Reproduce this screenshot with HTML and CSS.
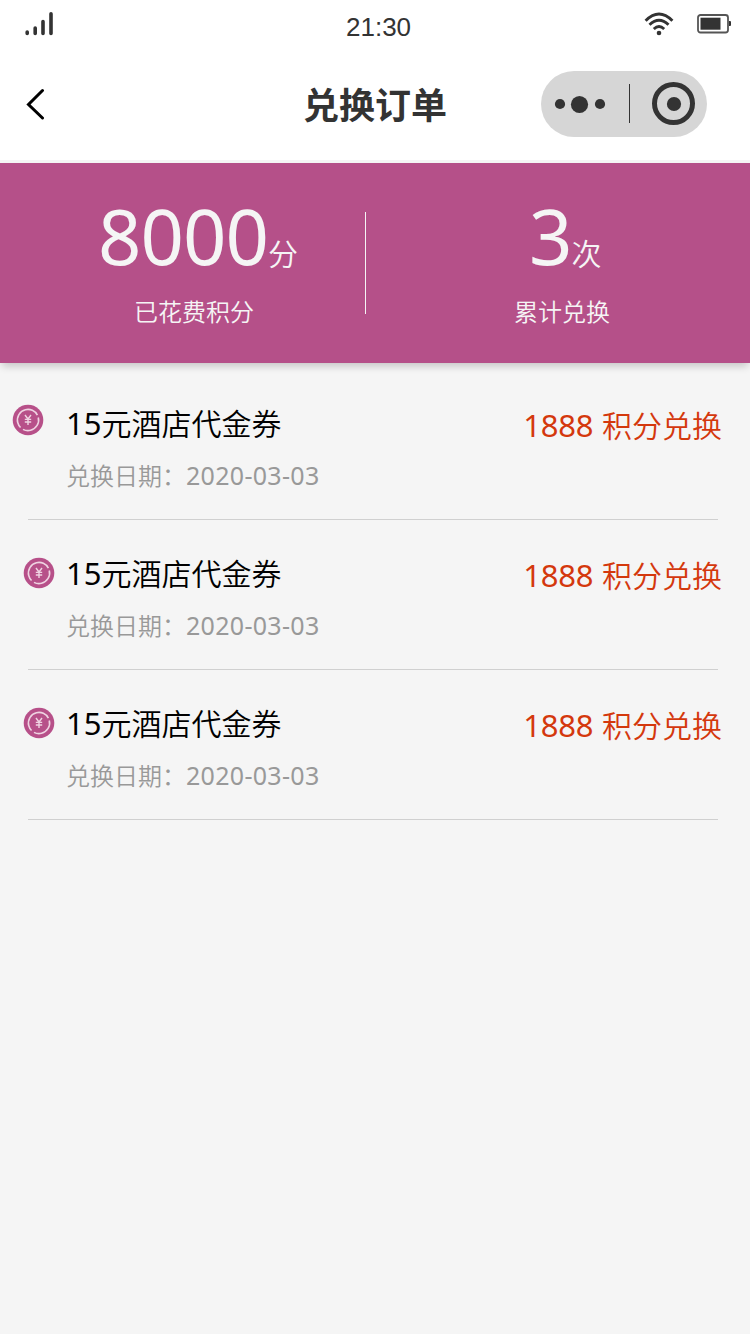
FILE: index.html
```html
<!DOCTYPE html>
<html lang="zh-CN">
<head>
    <meta charset="UTF-8">
    <meta name="viewport" content="width=device-width, initial-scale=1.0">
    <title>兑换订单</title>
    <link rel="stylesheet" href="styles.css">
</head>
<body>
    <svg class="symbols" width="0" height="0">
        <symbol id="coin" viewBox="0 0 32 32">
            <circle cx="16" cy="16" r="15.3" fill="#b75089"/>
            <circle cx="16" cy="16" r="10.6" fill="none" stroke="#efd3e2" stroke-width="1.6" stroke-dasharray="24.300 3 36.300 3" transform="rotate(-14 16 16)"/>
            <path d="M13 11l3 4 3-4M12.8 15.4h6.4M12.8 18h6.4M16 15v6" fill="none" stroke="#efd3e2" stroke-width="1.4"/>
        </symbol>
    </svg>

    <div class="header">
        <div class="status-bar">
            <svg class="signal" width="30" height="26" viewBox="0 0 30 26" stroke="#333" stroke-width="3.6" stroke-linecap="round">
                <path d="M3.2 21v1.5M11.2 17v5.5M19 10.5v12M27 2.8v19.7"/>
            </svg>
            <span class="time">21:30</span>
            <svg class="wifi" width="30" height="24" viewBox="0 0 30 24" fill="none" stroke="#333" stroke-width="2.9">
                <path d="M1.6 8.7Q15-4.7 28.4 8.7M5.5 12.8Q15 3.8 24.5 12.8M9.8 17Q15 12.2 20.2 17"/>
                <circle cx="15" cy="21" r="2.3" fill="#333" stroke="none"/>
            </svg>
            <svg class="battery" width="34" height="20" viewBox="0 0 34 20">
                <rect x="1" y="1" width="30" height="17.5" rx="2.5" fill="none" stroke="#555" stroke-width="1.8"/>
                <rect x="3.5" y="3.7" width="20" height="12" fill="#333"/>
                <path d="M32 7h1q1 0 1 1v3q0 1-1 1h-1z" fill="#333"/>
            </svg>
        </div>
        <div class="nav-bar">
            <svg class="back" width="20" height="32" viewBox="0 0 20 32" fill="none" stroke="#000" stroke-width="3" stroke-linecap="round">
                <path d="M16.5 2.5L2.5 16.5l14 13.5"/>
            </svg>
            <h1>兑换订单</h1>
            <div class="capsule">
                <svg width="166" height="66" viewBox="0 0 166 66" fill="#333">
                    <circle cx="19" cy="33" r="5.1"/>
                    <circle cx="38.5" cy="33.5" r="8.6"/>
                    <circle cx="59" cy="33" r="5.1"/>
                    <rect x="88" y="13" width="1" height="39"/>
                    <circle cx="132.5" cy="32.5" r="19" fill="none" stroke="#333" stroke-width="5"/>
                    <circle cx="133" cy="33" r="7.1"/>
                </svg>
            </div>
        </div>
    </div>

    <div class="summary">
        <div class="summary-item spent">
            <p class="total"><span class="num">8000</span>分</p>
            <p class="label">已花费积分</p>
        </div>
        <div class="summary-item times">
            <p class="total"><span class="num">3</span>次</p>
            <p class="label">累计兑换</p>
        </div>
    </div>

    <div class="orders">
        <div class="order first">
            <svg class="coin"><use href="#coin"/></svg>
            <div class="info">
                <h2><span class="num">15</span>元酒店代金券</h2>
                <p class="date">兑换日期：<span class="num">2020-03-03</span></p>
            </div>
            <p class="points"><span class="num">1888</span> 积分兑换</p>
        </div>
        <div class="order">
            <svg class="coin"><use href="#coin"/></svg>
            <div class="info">
                <h2><span class="num">15</span>元酒店代金券</h2>
                <p class="date">兑换日期：<span class="num">2020-03-03</span></p>
            </div>
            <p class="points"><span class="num">1888</span> 积分兑换</p>
        </div>
        <div class="order">
            <svg class="coin"><use href="#coin"/></svg>
            <div class="info">
                <h2><span class="num">15</span>元酒店代金券</h2>
                <p class="date">兑换日期：<span class="num">2020-03-03</span></p>
            </div>
            <p class="points"><span class="num">1888</span> 积分兑换</p>
        </div>
    </div>
</body>
</html>
```
FILE: styles.css
```css
* {
    box-sizing: border-box;
    margin: 0;
    padding: 0;
}

body {
    font-family: "Noto Sans CJK SC", sans-serif;
    font-weight: 350;
    background: #f5f5f5;
    min-height: 1334px;
}

.symbols {
    display: block;
}

.num {
    font-family: "Noto Sans", "Noto Sans CJK SC", sans-serif;
    font-weight: 400;
}

.header {
    height: 160px;
    background: #fff;
}

.status-bar {
    display: flex;
    align-items: flex-start;
    height: 52px;
    padding: 0 19px 0 24px;
}

.signal {
    margin-top: 11px;
}

.time {
    margin: 11px 0 0 292px;
    width: 66px;
    font: 400 26px/32px "Liberation Sans", sans-serif;
    color: #333;
}

.wifi {
    margin: 12px 0 0 232px;
}

.battery {
    margin: 14px 0 0 23px;
}

.nav-bar {
    display: grid;
    grid-template-columns: 209px 1fr 209px;
    align-items: center;
    height: 104px;
}

.back {
    margin-left: 26px;
}

.nav-bar h1 {
    margin-top: -2px;
    font-size: 36px;
    line-height: 52px;
    font-weight: 700;
    color: #333;
    text-align: center;
}

.capsule {
    width: 166px;
    height: 66px;
    border-radius: 33px;
    background: #d6d6d6;
}

.summary {
    display: flex;
    height: 200px;
    margin-top: 3px;
    padding-top: 49px;
    background: #b55089;
    color: #f5f5f5;
    box-shadow: 0 5px 8px -2px rgba(0, 0, 0, 0.2);
}

.summary-item {
    height: 102px;
}

.spent {
    width: 366px;
    padding-left: 98px;
    border-right: 1px solid #f5f5f5;
}

.times {
    padding-left: 163px;
}

.total {
    height: 84px;
    margin-top: -18px;
    font-size: 30px;
    line-height: 84px;
    white-space: nowrap;
}

.total .num {
    font-size: 76px;
    letter-spacing: -1px;
}

.label {
    margin-top: 15px;
    font-size: 24px;
    line-height: 36px;
}

.spent .label {
    padding-left: 36px;
}

.times .label {
    margin-left: -15px;
}

.orders {
    padding: 7px 32px 0 28px;
}

.order {
    display: flex;
    align-items: flex-start;
    height: 150px;
    border-bottom: 1px solid #d0d0d0;
}

.coin {
    width: 32px;
    height: 32px;
    margin: 37px 11px 0 -5px;
}

.first .coin {
    margin: 34px 22px 0 -16px;
}

.info {
    padding-top: 29px;
}

.order h2 {
    font-size: 30px;
    line-height: 46px;
    font-weight: 350;
    color: #000;
}

.order h2 .num {
    font-size: 31px;
}

.date {
    margin-top: 11px;
    font-size: 24px;
    line-height: 36px;
    color: #999;
}

.date .num {
    font-size: 25px;
    letter-spacing: 0.3px;
}

.points {
    margin: 31px -4px 0 auto;
    font-size: 30px;
    line-height: 46px;
    color: #d4380d;
}

.points .num {
    margin-right: 2px;
    font-size: 31px;
    letter-spacing: -0.2px;
}
```
